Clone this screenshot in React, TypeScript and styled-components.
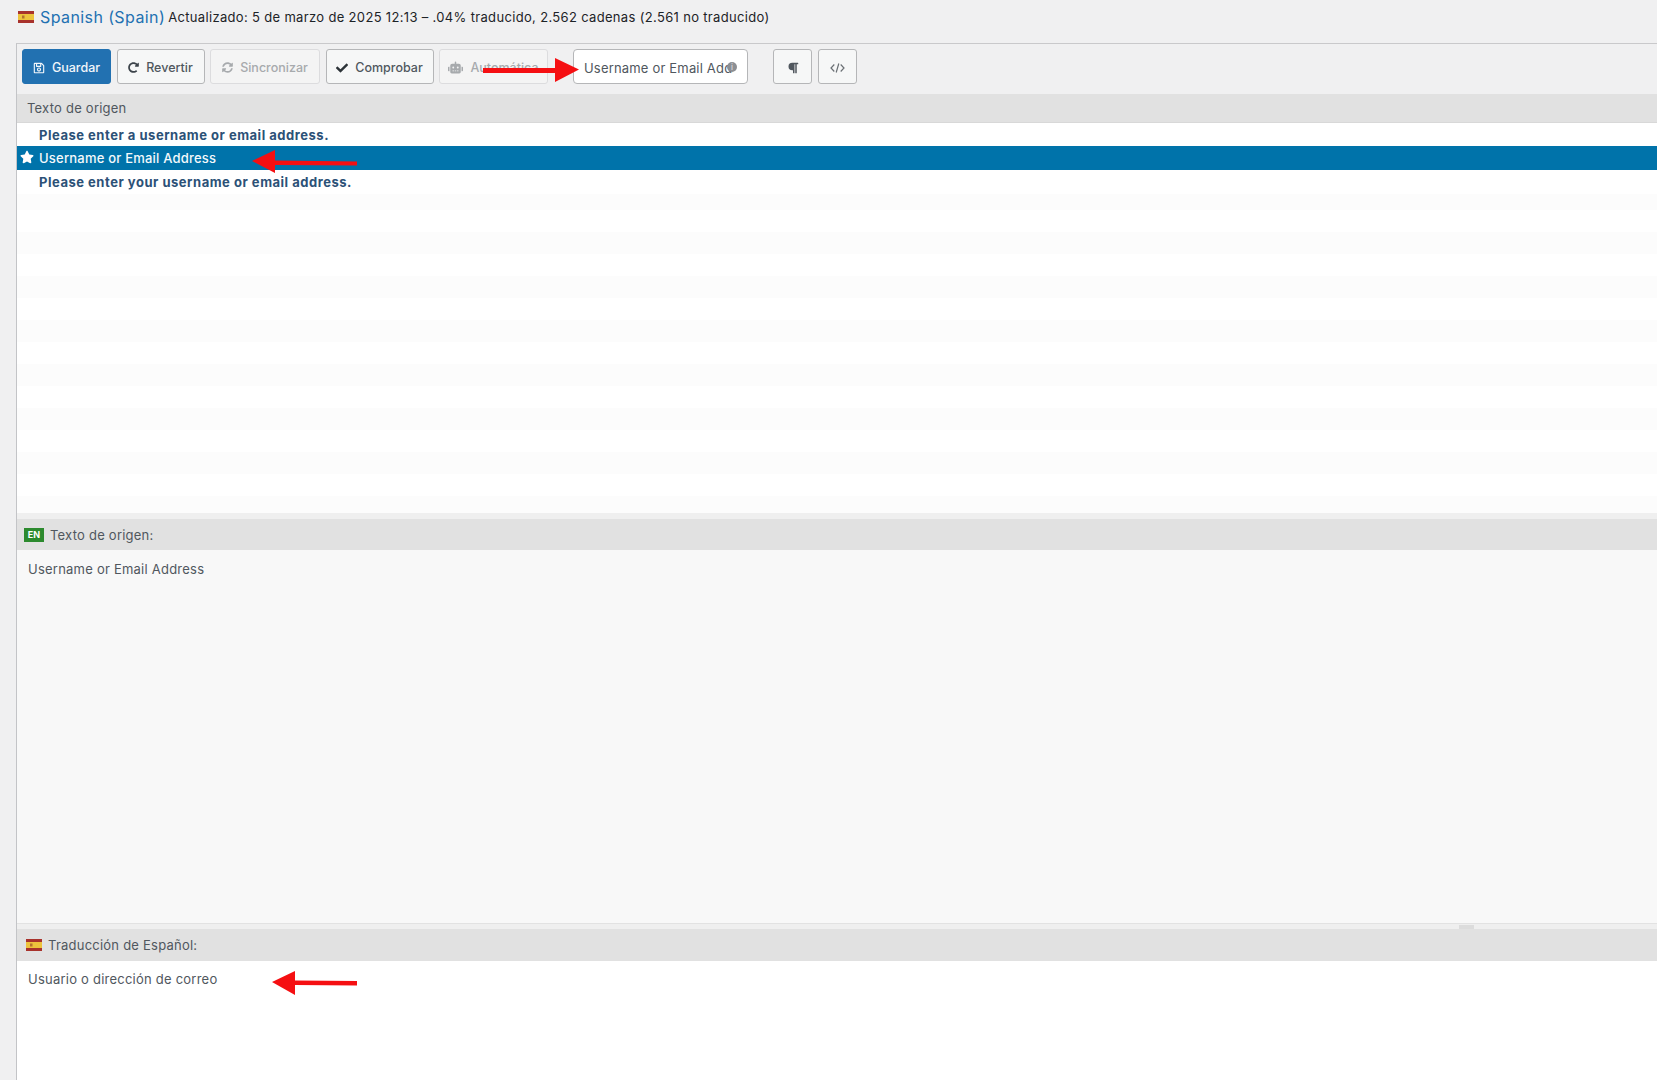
import React from "react";
import styled, { createGlobalStyle } from "styled-components";
import { FaCheck, FaParagraph, FaRegSave, FaRedoAlt, FaRobot, FaStar, FaSyncAlt } from "react-icons/fa";

const Global = createGlobalStyle`
  html, body { margin: 0; padding: 0; height: 100%; overflow: hidden; background: #f0f0f1; }
  body { font-family: Inter, "Liberation Sans", sans-serif; font-size: 13px; color: #3c434a; letter-spacing: 0.23px; }
  #root { height: 100%; }
`;

const Page = styled.div`
  position: relative;
  height: 1080px;
  display: flex;
  flex-direction: column;
  overflow: hidden;
  -webkit-font-smoothing: antialiased;
`;

const Heading = styled.header`
  height: 43px;
  box-sizing: border-box;
  padding: 0 0 9px 18px;
  display: flex;
  align-items: center;
  gap: 5px;
`;

const FlagWrap = styled.svg`
  width: 16px;
  height: 12px;
  flex: none;
`;

const Title = styled.a`
  font-size: 16px;
  letter-spacing: 0.4px;
  color: #2271b1;
  margin-left: 1px;
  margin-right: -2px;
`;

const Meta = styled.span`
  font-size: 13px;
  letter-spacing: 0.33px;
  color: #1d2327;
`;

const Panel = styled.main`
  flex: 1;
  min-height: 0;
  margin-left: 16px;
  border-top: 1px solid #c9c9cb;
  border-left: 1px solid #c3c4c7;
  display: flex;
  flex-direction: column;
`;

const Toolbar = styled.div`
  height: 50px;
  flex: none;
  box-sizing: border-box;
  padding: 5px 0 0 5px;
  display: flex;
  align-items: flex-start;
  gap: 5.5px;
`;

const Button = styled.button<{ $primary?: boolean; $w: number }>`
  width: ${(p) => p.$w}px;
  height: 35px;
  flex: none;
  box-sizing: border-box;
  padding: 2px 0 0;
  border-radius: 3px;
  display: flex;
  align-items: center;
  justify-content: center;
  gap: 7px;
  font: 500 12.5px Inter, "Liberation Sans", sans-serif;
  color: ${(p) => (p.$primary ? "#f2f6fa" : "#50575e")};
  background: ${(p) => (p.$primary ? "#2271b1" : "#f6f7f7")};
  border: 1px solid ${(p) => (p.$primary ? "#2271b1" : "#b5b6b8")};
  &:disabled {
    color: #a7aaad;
    border-color: #dcdcde;
    background: #f4f4f4;
  }
  svg { flex: none; }
`;

const SearchWrap = styled.div`
  position: relative;
  width: 175px;
  height: 35px;
  flex: none;
  margin-left: 19.5px;
`;

const Search = styled.input`
  width: 100%;
  height: 100%;
  box-sizing: border-box;
  padding: 2px 14px 0 10px;
  border: 1px solid #b5b6b8;
  border-radius: 4px;
  background: #fff;
  font: 13px Inter, "Liberation Sans", sans-serif;
  letter-spacing: 0.18px;
  color: #50575e;
  outline: none;
`;

const ClearDot = styled.span`
  position: absolute;
  right: 11px;
  top: 13px;
  width: 10px;
  height: 10px;
  border-radius: 50%;
  background: #8c8f94;
  color: #e8e8e8;
  font-size: 8px;
  line-height: 10px;
  text-align: center;
`;

const IconGroup = styled.div`
  display: flex;
  gap: 5.5px;
  margin-left: 19.5px;
`;

const SectionHead = styled.div<{ $h: number }>`
  height: ${(p) => p.$h}px;
  flex: none;
  box-sizing: border-box;
  padding-left: 10px;
  display: flex;
  align-items: center;
  background: #e1e1e1;
  color: #50575e;
  font-size: 13px;
  gap: 6px;
`;

const SectionFlag = styled.span`
  display: flex;
  margin-left: -1px;
`;

const Badge = styled.span`
  width: 20px;
  height: 14px;
  margin-left: -3px;
  flex: none;
  background: #2c8a2e;
  color: #fff;
  font-size: 9px;
  font-weight: 700;
  letter-spacing: 0;
  line-height: 14px;
  text-align: center;
`;

const List = styled.div`
  height: 391px;
  flex: none;
  display: flex;
  flex-direction: column;
  background: #fff;
  border-top: 1px solid #d8d8d8;
  box-sizing: border-box;
`;

const Row = styled.div<{ $selected?: boolean }>`
  height: 24px;
  flex: none;
  box-sizing: border-box;
  padding-left: 22px;
  position: relative;
  display: flex;
  align-items: center;
  font-size: 13px;
  font-weight: ${(p) => (p.$selected ? 500 : 700)};
  color: ${(p) => (p.$selected ? "#f4f9fc" : "#2c5177")};
  background: ${(p) => (p.$selected ? "#0073aa" : "#fff")};
  letter-spacing: ${(p) => (p.$selected ? "0.21px" : "0.52px")};
  &:first-child { height: 23px; }
`;

const RowStar = styled.span`
  position: absolute;
  left: 3px;
  top: 4px;
  display: flex;
  color: #fff;
`;

const Stripes = styled.div`
  flex: 1;
  background: repeating-linear-gradient(
    to bottom,
    #fcfcfc 0,
    #fcfcfc 22px,
    #fff 22px,
    #fff 44px
  );
  background-position: 0 -6px;
`;

const Spacer = styled.div`
  height: 6px;
  flex: none;
  background: #efefef;
`;

const SourcePane = styled.div`
  height: 373px;
  flex: none;
  box-sizing: border-box;
  padding: 10px 11px;
  background: #f8f8f8;
  color: #50575e;
  font-size: 13px;
  line-height: 18px;
`;

const Gutter = styled.div`
  height: 6px;
  flex: none;
  box-sizing: border-box;
  border-top: 1px solid #e2e2e2;
  background: #efefef;
  display: flex;
  justify-content: flex-end;
  padding-right: 183px;
`;

const Grip = styled.span`
  width: 15px;
  height: 4px;
  margin-top: 1px;
  background: #dcdcdc;
  border-bottom: 1px solid #fff;
`;

const TargetPane = styled.div`
  flex: 1;
  box-sizing: border-box;
  padding: 9px 11px;
  background: #fff;
  color: #50575e;
  font-size: 13px;
  line-height: 18px;
`;

const Annotations = styled.svg`
  position: absolute;
  left: 0;
  top: 0;
  width: 1657px;
  height: 1080px;
  pointer-events: none;
`;

const Flag = () => (
  <FlagWrap viewBox="0 0 16 12">
    <rect width="16" height="12" fill="#a8322c" />
    <rect y="3" width="16" height="6" fill="#edc33c" />
    <rect x="4" y="4.5" width="2.5" height="3" fill="#b5722f" />
  </FlagWrap>
);

const CodeGlyph = () => (
  <svg width="15" height="12" viewBox="0 0 15 12" fill="none" stroke="#6b7075" strokeWidth="1.2">
    <path d="M4.3 2.5 1 6l3.3 3.5M10.7 2.5 14 6l-3.3 3.5M8.8 1.5 6.2 10.5" />
  </svg>
);

export default function App() {
  return (
    <Page>
      <Global />
      <Heading>
        <Flag />
        <Title>Spanish (Spain)</Title>
        <Meta>Actualizado: 5 de marzo de 2025 12:13 – .04% traducido, 2.562 cadenas (2.561 no traducido)</Meta>
      </Heading>
      <Panel>
        <Toolbar>
          <Button $primary $w={89}><FaRegSave size={12} />Guardar</Button>
          <Button $w={88}><FaRedoAlt size={11} color="#3c434a" />Revertir</Button>
          <Button $w={110} disabled><FaSyncAlt size={11} />Sincronizar</Button>
          <Button $w={108}><FaCheck size={12} color="#2c3338" />Comprobar</Button>
          <Button $w={109} disabled><FaRobot size={15} />Automática</Button>
          <SearchWrap>
            <Search readOnly value="Username or Email Address" />
            <ClearDot>i</ClearDot>
          </SearchWrap>
          <IconGroup>
            <Button $w={39}><FaParagraph size={12} color="#50575e" /></Button>
            <Button $w={39}><CodeGlyph /></Button>
          </IconGroup>
        </Toolbar>
        <SectionHead $h={28}>Texto de origen</SectionHead>
        <List>
          <Row>Please enter a username or email address.</Row>
          <Row $selected>
            <RowStar><FaStar size={14} /></RowStar>
            Username or Email Address
          </Row>
          <Row>Please enter your username or email address.</Row>
          <Stripes />
        </List>
        <Spacer />
        <SectionHead $h={31}><Badge>EN</Badge>Texto de origen:</SectionHead>
        <SourcePane>Username or Email Address</SourcePane>
        <Gutter><Grip /></Gutter>
        <SectionHead $h={32}><SectionFlag><Flag /></SectionFlag>Traducción de Español:</SectionHead>
        <TargetPane>Usuario o dirección de correo</TargetPane>
      </Panel>
      <Annotations viewBox="0 0 1657 1080">
        <path fill="#f50f12" d="M483 68 L555 68 L555 58 L579 69.5 L555 82 L555 73 L483 73 Z" />
        <path fill="#f50f12" d="M252 161 L275 150 L275 160.5 L357 161.5 L357 165.5 L275 165 L275 173 Z" />
        <path fill="#f50f12" d="M272 982 L295 971 L295 980.5 L357 981 L357 985.5 L295 985 L295 995 Z" />
      </Annotations>
    </Page>
  );
}
